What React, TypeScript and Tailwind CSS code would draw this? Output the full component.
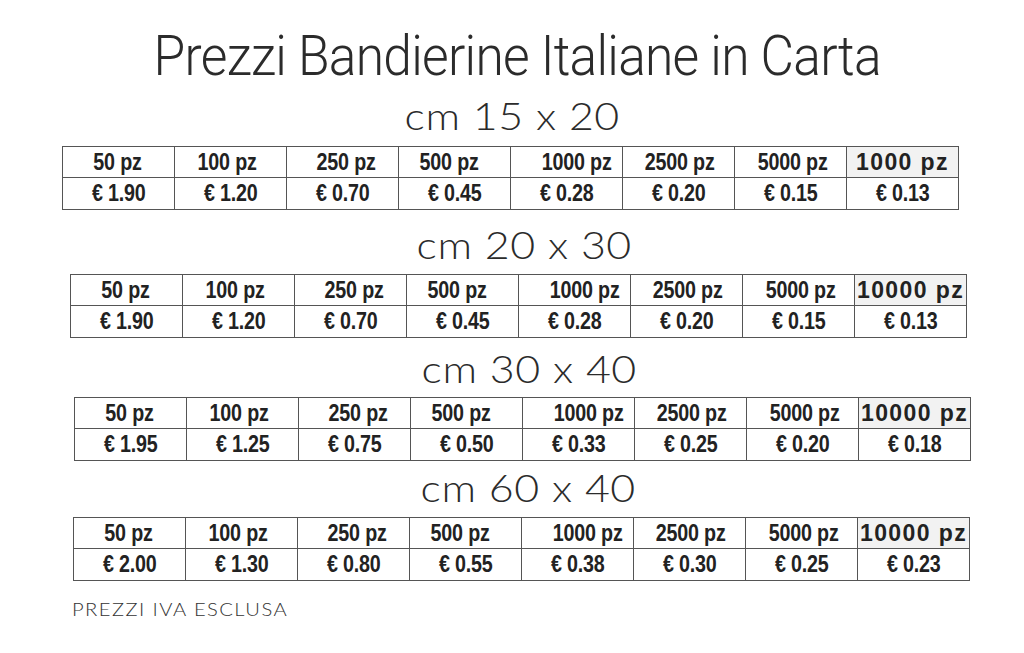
import React from 'react';

type Section = {
  size: string;
  left: string;
  shift: string;
  last: string;
  prices: string[];
};

const headers = ['50 pz', '100 pz', '250 pz', '500 pz', '1000 pz', '2500 pz', '5000 pz'];

// small nudges so the header labels sit where they do in the source sheet
const headerNudge = ['pr-[2px]', 'pr-[6px]', 'pl-[8px]', 'pr-[10px]', 'pl-[20px]', 'pl-[2px]', 'pl-[4px]'];

const sections: Section[] = [
  {
    size: 'cm 15 x 20',
    left: 'ml-[62px]',
    shift: 'pl-[4px]',
    last: '1000 pz',
    prices: ['€ 1.90', '€ 1.20', '€ 0.70', '€ 0.45', '€ 0.28', '€ 0.20', '€ 0.15', '€ 0.13'],
  },
  {
    size: 'cm 20 x 30',
    left: 'ml-[70px]',
    shift: 'pl-[12px]',
    last: '10000 pz',
    prices: ['€ 1.90', '€ 1.20', '€ 0.70', '€ 0.45', '€ 0.28', '€ 0.20', '€ 0.15', '€ 0.13'],
  },
  {
    size: 'cm 30 x 40',
    left: 'ml-[74px]',
    shift: 'pl-[13px]',
    last: '10000 pz',
    prices: ['€ 1.95', '€ 1.25', '€ 0.75', '€ 0.50', '€ 0.33', '€ 0.25', '€ 0.20', '€ 0.18'],
  },
  {
    size: 'cm 60 x 40',
    left: 'ml-[73px]',
    shift: 'pl-[14px]',
    last: '10000 pz',
    prices: ['€ 2.00', '€ 1.30', '€ 0.80', '€ 0.55', '€ 0.38', '€ 0.30', '€ 0.25', '€ 0.23'],
  },
];

const sectionGaps = [
  { sub: 'mt-[13px]', table: 'mt-[13px]' },
  { sub: 'mt-[16px]', table: 'mt-[12px]' },
  { sub: 'mt-[12px]', table: 'mt-[11px]' },
  { sub: 'mt-[8px]', table: 'mt-[12px]' },
];

function Cell({ text, nudge = '' }: { text: string; nudge?: string }) {
  return (
    <div className={`flex items-center justify-center bg-white pb-[1px] ${nudge}`}>
      <span className="inline-block scale-x-[0.82] whitespace-nowrap font-['Liberation_Sans',Arial,sans-serif] text-[24px] font-bold leading-none tracking-[-0.2px]">
        {text}
      </span>
    </div>
  );
}

function PriceTable({ section }: { section: Section }) {
  return (
    <div className="grid w-[897px] grid-cols-[repeat(8,111px)] grid-rows-[30px_31px] gap-px bg-[#555] p-px text-[#222]">
      {headers.map((h, i) => (
        <Cell key={h} text={h} nudge={headerNudge[i]} />
      ))}
      <div className="flex items-center justify-center bg-[#f2f2f2] font-['Liberation_Sans',Arial,sans-serif] text-[23px] font-bold leading-none tracking-[1.4px] text-[#222]">
        {section.last}
      </div>
      {section.prices.map((p, i) => (
        <Cell key={i} text={p} />
      ))}
    </div>
  );
}

export default function App() {
  return (
    <div className="flex h-[653px] w-[1024px] flex-col overflow-hidden bg-white text-[#2b2b2b]">
      <h1 className="mt-[28px] h-[56px] pl-[11px] text-center font-['Roboto',sans-serif] text-[56px] font-light leading-[56px]">
        <span className="inline-block scale-x-[0.92] whitespace-nowrap tracking-[-0.8px]">
          Prezzi Bandierine Italiane in Carta
        </span>
      </h1>

      {sections.map((s, i) => (
        <div key={s.size} className={`flex w-[897px] flex-col ${s.left}`}>
          <div
            className={`h-[36px] text-center font-['Lato',sans-serif] text-[38px] font-light leading-[36px] ${s.shift} ${sectionGaps[i].sub}`}
          >
            <span className="inline-block scale-x-[1.13] whitespace-nowrap tracking-[0.5px]">{s.size}</span>
          </div>
          <div className={sectionGaps[i].table}>
            <PriceTable section={s} />
          </div>
        </div>
      ))}

      <p className="ml-[72px] mt-[19px] h-[18px] font-['Lato',sans-serif] text-[18px] font-light leading-[18px] text-[#333]">
        <span className="inline-block origin-left scale-x-[1.12] whitespace-nowrap tracking-[1.3px]">
          PREZZI IVA ESCLUSA
        </span>
      </p>
    </div>
  );
}
